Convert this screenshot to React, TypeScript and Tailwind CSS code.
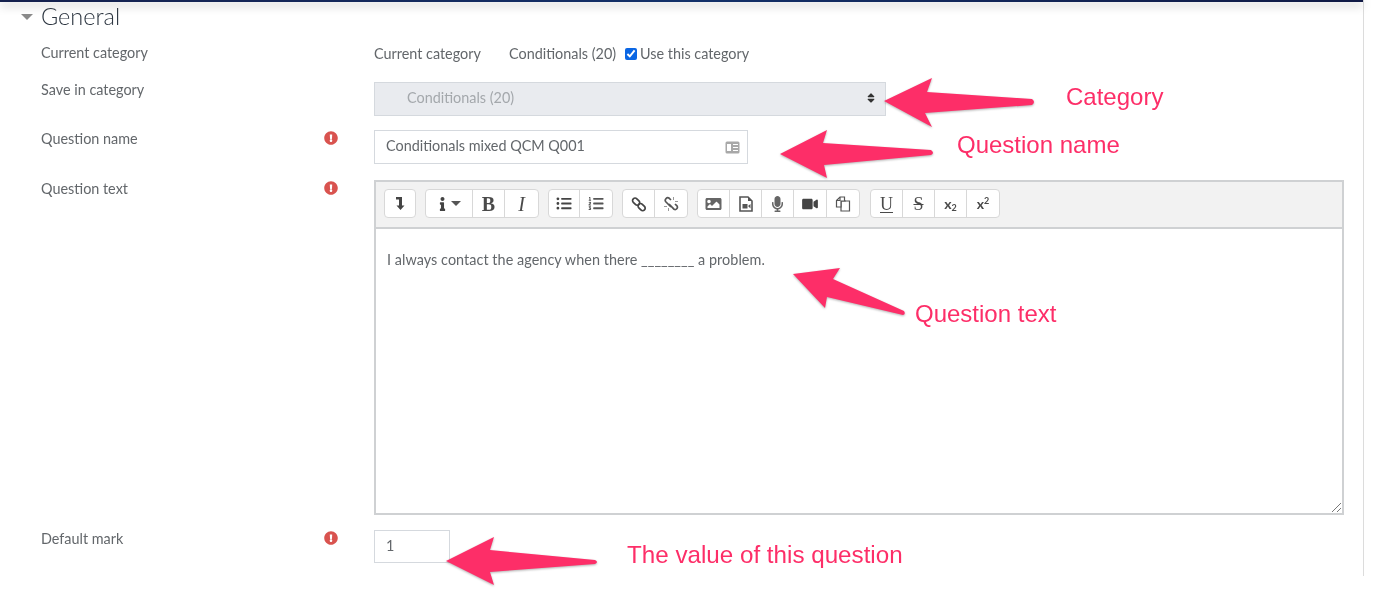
import {
  FaExclamationCircle,
  FaImage,
  FaInfo,
  FaListOl,
  FaListUl,
  FaMicrophone,
  FaSort,
  FaVideo,
} from "react-icons/fa";
import type { ReactNode } from "react";

const ArrowDown = () => (
  <svg width="10" height="15" viewBox="0 0 10 15" fill="#444">
    <path d="M1 1h6v8.500h2.500L5.500 14 1.500 9.500H4V3.500H1z" />
  </svg>
);

const FileVideo = () => (
  <svg width="14" height="16" viewBox="0 0 14 16">
    <path d="M1 1h8l4 4v10H1z" fill="#fff" stroke="#555" strokeWidth="1.6" />
    <path d="M9 1v4h4" fill="#555" />
    <rect x="3.500" y="8" width="5" height="4.500" fill="#555" />
    <path d="M9 10l2.500-2v4.500z" fill="#555" />
  </svg>
);

const LinkIcon = ({ broken }: { broken?: boolean }) => (
  <svg
    width="16"
    height="16"
    viewBox="0 0 16 16"
    fill="none"
    stroke={broken ? "#555" : "#444"}
    strokeWidth="1.7"
  >
    {broken ? (
      <>
        <path d="M8 4 6.300 2.300a2.500 2.500 0 0 0-3.500 3.500L8 11" />
        <path d="M6 8l5 5.200a2.300 2.300 0 0 0 3-3.300L12 8" />
        <path d="M10.500 1v3M15 5.500h-3M1 10.500h3M5.500 15v-3" strokeWidth="1" stroke="#999" />
      </>
    ) : (
      <>
        <rect x="-1" y="-2.500" width="8" height="5" rx="2.500" transform="translate(3 3.500) rotate(45)" />
        <rect x="-1" y="-2.500" width="8" height="5" rx="2.500" transform="translate(8.500 9) rotate(45)" />
      </>
    )}
  </svg>
);

const CopyIcon = () => (
  <svg width="16" height="16" viewBox="0 0 16 16" fill="#fff" stroke="#555" strokeWidth="1.2">
    <path d="M6 5h8.500v10H6z" />
    <path d="M5 1h4.500v3L10 5H6v6H1.500V4.500z" />
    <path d="M5 1v3.500H1.500" fill="none" />
  </svg>
);

const glyph = "leading-none text-[#4a4a4a] [font-family:'Liberation_Serif',serif]";

const groups: { w: number; node: ReactNode }[][] = [
  [{ w: 30, node: <ArrowDown /> }],
  [
    {
      w: 47,
      node: (
        <span className="flex items-center gap-[5px] pl-[2px]">
          <FaInfo className="h-[14px] w-[7px] text-[#444]" />
          <span className="h-0 w-0 border-x-[5px] border-t-[5px] border-x-transparent border-t-[#555]" />
        </span>
      ),
    },
    { w: 32, node: <span className={glyph + " text-[20px] font-bold"}>B</span> },
    { w: 33, node: <span className={glyph + " text-[20px] italic"}>I</span> },
  ],
  [
    { w: 31, node: <FaListUl className="h-[15px] w-[16px] text-[#444]" /> },
    { w: 32, node: <FaListOl className="h-[15px] w-[16px] text-[#555]" /> },
  ],
  [
    { w: 32, node: <LinkIcon /> },
    { w: 32, node: <LinkIcon broken /> },
  ],
  [
    { w: 32, node: <FaImage className="h-[16px] w-[17px] text-[#666]" /> },
    { w: 32, node: <FileVideo /> },
    { w: 32, node: <FaMicrophone className="h-[16px] w-[11px] text-[#666]" /> },
    { w: 33, node: <FaVideo className="h-[14px] w-[16px] text-[#444]" /> },
    { w: 32, node: <CopyIcon /> },
  ],
  [
    {
      w: 32,
      node: <span className={glyph + " text-[18px] underline underline-offset-2"}>U</span>,
    },
    { w: 32, node: <span className={glyph + " text-[18px] line-through"}>S</span> },
    {
      w: 32,
      node: (
        <span className="text-[14px] font-bold leading-none text-[#4a4a4a]">
          x<sub className="text-[9px]">2</sub>
        </span>
      ),
    },
    {
      w: 32,
      node: (
        <span className="text-[14px] font-bold leading-none text-[#4a4a4a]">
          x<sup className="text-[9px]">2</sup>
        </span>
      ),
    },
  ],
];

const Required = () => (
  <FaExclamationCircle className="h-[14px] w-[14px] text-[#d9534f]" />
);

const Label = ({ text, required }: { text: string; required?: boolean }) => (
  <div className="flex w-[374px] shrink-0 items-start pl-[41px]">
    <span className="w-[283px]">{text}</span>
    {required && (
      <span className="pt-[1px]">
        <Required />
      </span>
    )}
  </div>
);

const Annotation = ({
  className,
  children,
}: {
  className: string;
  children: ReactNode;
}) => (
  <span
    className={
      "absolute whitespace-nowrap leading-none text-[#fd2e68] [font-family:'Liberation_Sans',Arial,sans-serif] " +
      className
    }
  >
    {children}
  </span>
);

const Arrows = () => (
  <svg
    className="pointer-events-none absolute left-0 top-0 drop-shadow-[0_1px_1px_rgba(0,0,0,0.3)]"
    width="1384"
    height="589"
    fill="#fd2e68"
  >
    <path d="M884 101 932 78 927 92 1032 99Q1036 102 1032 105L925 113 932 127Z" />
    <path d="M780 154 827 130 823 143 931 150Q935 153 931 155L824 165 827 178Z" />
    <path d="M793 274 840 268 833 279 904 311Q906 314 903 315L827 297 825 308Z" />
    <path d="M446 561 494 537 490 550 595 560Q599 562 595 564L490 572 494 585Z" />
  </svg>
);

export default function App() {
  return (
    <div className="relative h-[589px] w-[1384px] overflow-hidden bg-white text-[14.4px] leading-[18px] text-[#63676b] blur-[0.4px] [font-family:Lato,sans-serif]">
      <div className="h-[576px] w-[1364px] border-r border-[#dcdcdc]">
        <div className="h-[2px] bg-gradient-to-r from-[#14204d] via-[#123069] to-[#101a45] shadow-[0_3px_10px_rgba(0,0,0,0.4)]" />

        <div className="flex h-[30px] items-center pl-[21px]">
          <span className="mr-[8px] h-0 w-0 border-x-[6px] border-t-[6px] border-x-transparent border-t-[#8a8a8a]" />
          <h2 className="text-[23.5px] font-light leading-none text-[#2c3540]">General</h2>
        </div>

        <div className="mt-[12px] flex h-[18px]">
          <Label text="Current category" />
          <div className="flex items-center pt-[2px]">
            <span className="w-[135px]">Current category</span>
            <span className="w-[116px] whitespace-nowrap">Conditionals (20)</span>
            <input
              type="checkbox"
              defaultChecked
              className="mr-[3px] h-[12px] w-[12px] accent-[#0a66e4]"
            />
            <span>Use this category</span>
          </div>
        </div>

        <div className="mt-[20px] flex h-[34px]">
          <div className="-mt-[1px]">
            <Label text="Save in category" />
          </div>
          <div className="flex h-[34px] w-[512px] items-center justify-between border border-[#d5d9de] bg-[#e9ebef] pb-[2px] pl-[32px] pr-[10px] text-[#a4a8ac]">
            <span>Conditionals (20)</span>
            <FaSort className="h-[12px] w-[8px] text-[#333]" />
          </div>
        </div>

        <div className="mt-[14px] flex h-[34px] items-start">
          <Label text="Question name" required />
          <div className="flex h-[34px] w-[374px] items-center justify-between border border-[#d5d9de] pl-[11px] pr-[7px]">
            <span className="pb-[2px]">Conditionals mixed QCM Q001</span>
            <svg width="15" height="13" viewBox="0 0 15 13">
              <rect x="0.500" y="0.500" width="14" height="12" rx="1.500" fill="#a8a8a8" />
              <rect x="2" y="3" width="4" height="7" fill="#fff" />
              <path d="M8 3.500h5M8 6.500h5M8 9.500h5" stroke="#fff" strokeWidth="1.200" />
            </svg>
          </div>
        </div>

        <div className="mt-[16px] flex items-start">
          <Label text="Question text" required />
          <div className="relative h-[335px] w-[970px] border-2 border-[#cfd1d3]">
            <div className="flex h-[47px] items-start border-b-2 border-[#cfd1d3] bg-[#f2f2f2] pl-[8px] pt-[7px]">
              {groups.map((group, i) => (
                <div
                  key={i}
                  className="mr-[9px] flex h-[29px] divide-x divide-[#d8d8d8] rounded-[4px] border border-[#d8d8d8] bg-white last:ml-[1px]"
                >
                  {group.map((item, j) => (
                    <div
                      key={j}
                      className="flex items-center justify-center"
                      style={{ width: item.w }}
                    >
                      {item.node}
                    </div>
                  ))}
                </div>
              ))}
            </div>
            <p className="pl-[11px] pt-[22px] tracking-[0.05px]">
              I always contact the agency when there ________ a problem.
            </p>
            <svg
              className="absolute bottom-0 right-0"
              width="11"
              height="11"
              viewBox="0 0 11 11"
              stroke="#777"
            >
              <path d="M1 10 10 1M6 10 10 6" />
            </svg>
          </div>
        </div>

        <div className="mt-[15px] flex h-[33px] items-start">
          <Label text="Default mark" required />
          <div className="flex h-[33px] w-[76px] items-center border border-[#d5d9de] pb-[2px] pl-[11px]">
            1
          </div>
        </div>
      </div>

      <Arrows />
      <Annotation className="left-[1066px] top-[85px] text-[24px]">Category</Annotation>
      <Annotation className="left-[957px] top-[133px] text-[24px]">Question name</Annotation>
      <Annotation className="left-[915px] top-[302px] text-[24px]">Question text</Annotation>
      <Annotation className="left-[627px] top-[543px] text-[24.2px]">The value of this question</Annotation>
    </div>
  );
}
